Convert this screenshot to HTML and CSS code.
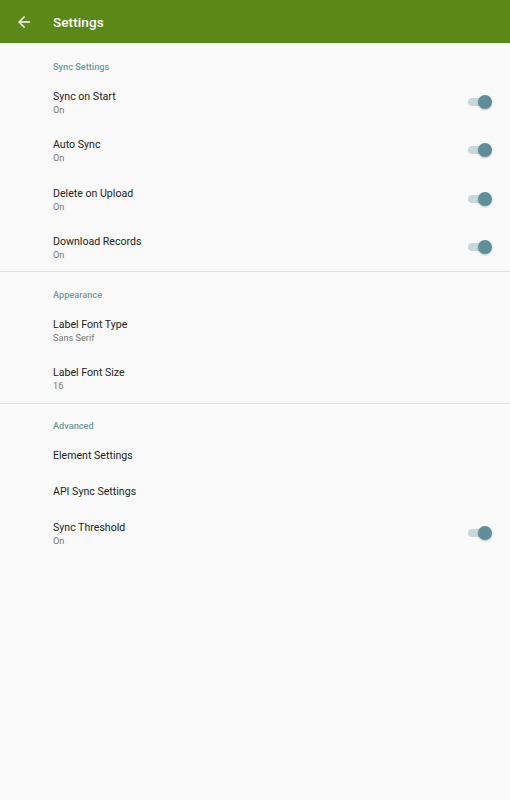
FILE: index.html
```html
<!DOCTYPE html>
<html lang="en">
 <head>
  <meta charset="UTF-8">
  <meta name="viewport" content="width=device-width, initial-scale=1.0">
  <title>Settings</title>
  <link rel="stylesheet" href="styles.css">
 </head>
<body>

<header class="toolbar">
 <svg class="back" viewBox="0 0 24 24" width="18" height="18">
  <path d="M20 11H7.83l5.59-5.59L12 4l-8 8 8 8 1.41-1.41L7.83 13H20v-2z" fill="#FFFFFF"/>
 </svg>
 <h1 class="toolbar-title">Settings</h1>
</header>

<main>
 <section class="group">
  <div class="group-title first">Sync Settings</div>
  <div class="pref two">
   <div class="pref-text"><div class="pref-title">Sync on Start</div><div class="pref-sum">On</div></div>
   <span class="switch"></span>
  </div>
  <div class="pref two">
   <div class="pref-text"><div class="pref-title">Auto Sync</div><div class="pref-sum">On</div></div>
   <span class="switch"></span>
  </div>
  <div class="pref two">
   <div class="pref-text"><div class="pref-title">Delete on Upload</div><div class="pref-sum">On</div></div>
   <span class="switch"></span>
  </div>
  <div class="pref two">
   <div class="pref-text"><div class="pref-title">Download Records</div><div class="pref-sum">On</div></div>
   <span class="switch"></span>
  </div>
 </section>

 <section class="group">
  <div class="group-title second">Appearance</div>
  <div class="pref two">
   <div class="pref-text"><div class="pref-title">Label Font Type</div><div class="pref-sum">Sans Serif</div></div>
  </div>
  <div class="pref two">
   <div class="pref-text"><div class="pref-title">Label Font Size</div><div class="pref-sum">16</div></div>
  </div>
 </section>

 <section class="group last">
  <div class="group-title">Advanced</div>
  <div class="pref one">
   <div class="pref-text"><div class="pref-title">Element Settings</div></div>
  </div>
  <div class="pref one">
   <div class="pref-text"><div class="pref-title">API Sync Settings</div></div>
  </div>
  <div class="pref two tight">
   <div class="pref-text"><div class="pref-title">Sync Threshold</div><div class="pref-sum">On</div></div>
   <span class="switch"></span>
  </div>
 </section>
</main>

</body>
</html>
```

FILE: styles.css
```css
body {
 margin: 0;
 font-family: Roboto, "Noto Sans", Arial, sans-serif;
 background: #FAFAFA;
 color: #212121;
}

/* Toolbar */
.toolbar {
 height: 43px;
 background: #5B8917;
 display: flex;
 align-items: center;
 padding-left: 15px;
 gap: 20px;
 box-sizing: border-box;
}

.back {
 display: block;
}

.toolbar-title {
 margin: 0;
 font-size: 13.5px;
 font-weight: 500;
 color: #FFFFFF;
 letter-spacing: 0.1px;
}

/* Gruppen */
.group {
 border-bottom: solid 1px #E2E2E2;
}

.group.last {
 border-bottom: none;
}

.group-title {
 padding: 17px 0 7px 53px;
 line-height: 10px;
 font-size: 9.2px;
 font-weight: 500;
 color: #6E9AA4;
}

.group-title.first {
 padding-top: 19px;
 padding-bottom: 6px;
}

.group-title.second {
 padding-top: 18px;
 padding-bottom: 6px;
}

/* Eintraege */
.pref {
 display: flex;
 align-items: center;
 padding-left: 53px;
 padding-right: 19px;
}

.pref.two {
 height: 48.25px;
}

.pref.two .pref-text {
 padding-top: 2px;
}

.pref.two.tight .pref-text {
 padding-top: 0;
}

.pref.two.tight .switch {
 margin-top: -2px;
}

.pref.one {
 height: 36.2px;
}

.pref-text {
 flex: 1;
}

.pref-title {
 font-size: 10.6px;
 line-height: 13px;
 color: #222222;
}

.pref-sum {
 font-size: 9.2px;
 line-height: 13px;
 color: #777777;
}

/* Schalter */
.switch {
 position: relative;
 width: 23px;
 height: 8px;
 border-radius: 4px;
 background: #C8D9DD;
}

.switch::after {
 content: "";
 position: absolute;
 right: -1px;
 top: -3px;
 width: 14px;
 height: 14px;
 border-radius: 50%;
 background: #5F8F9B;
 box-shadow: 0 1px 2px rgba(0, 0, 0, 0.25);
}
```
